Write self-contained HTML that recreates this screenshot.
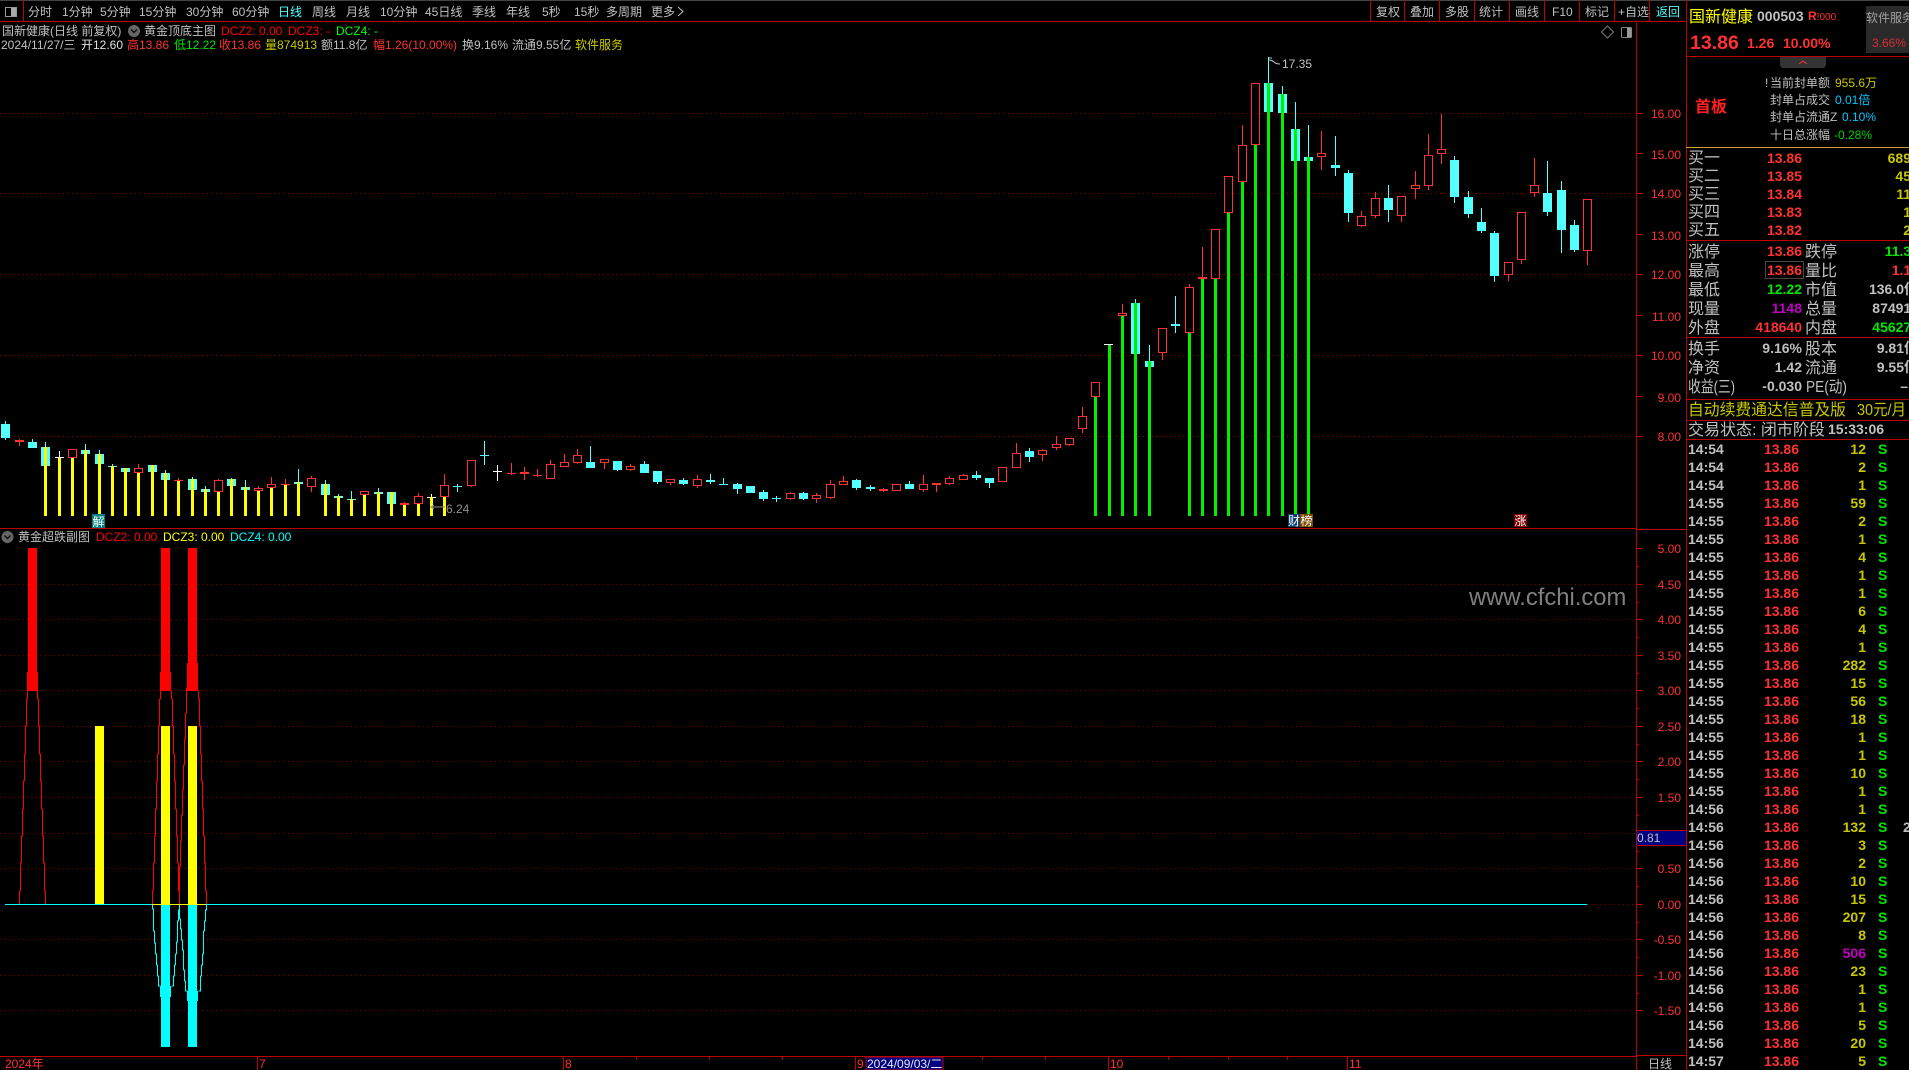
<!DOCTYPE html>
<html lang="zh"><head><meta charset="utf-8"><title>国新健康</title>
<style>
html,body{margin:0;padding:0;background:#000;width:1909px;height:1070px;overflow:hidden}
svg{display:block}
text{font-family:"Liberation Sans","WenQuanYi Zen Hei","Noto Sans CJK SC",sans-serif;font-size:12px;fill:#c0c0c0}
.g{fill:#c0c0c0}.r{fill:#ff3232}.y{fill:#c8c800}.c{fill:#54ffff}.n{fill:#00e600}.p{fill:#c000c0}
.big text,text.big{font-size:16px}
.b text{font-size:14px;font-weight:bold}
.e{text-anchor:end}
</style></head><body>
<svg width="1909" height="1070" viewBox="0 0 1909 1070" xmlns="http://www.w3.org/2000/svg">
<rect width="1909" height="1070" fill="#000"/>
<g shape-rendering="crispEdges">
<rect x="0" y="0" width="1909" height="1" fill="#444"/>
<!-- grid main -->
<path d="M0 113.5H1636M0 193.5H1636M0 274.5H1636M0 355.5H1636M0 436.5H1636" stroke="#a00000" stroke-dasharray="1 3.5" fill="none"/>
<!-- grid sub -->
<path d="M0 584.5H1636M0 619.5H1636M0 655.5H1636M0 690.5H1636M0 726.5H1636M0 761.5H1636M0 797.5H1636M0 833.5H1636M0 868.5H1636M1587 904.5H1636M0 939.5H1636M0 975.5H1636M0 1010.5H1636" stroke="#900000" stroke-dasharray="1 3.5" fill="none"/>
<!-- frame -->
<path d="M0 21.5H1686M0 528.5H1636M0 1056.5H1636M1636 1055.5H1686M1636.5 21V1070M1686.5 0V1070M23.5 0V21M1370.5 0V21M1404.5 0V21M1439.5 0V21M1474.5 0V21M1509.5 0V21M1544.5 0V21M1579.5 0V21M1614.5 0V21M1649.5 0V21M1686 56.5H1909M1686 240.5H1909M1686 337.5H1909M1686 399.5H1909M1686 420.5H1909M1686 439.5H1909M1636 529.5H1686" stroke="#c00000" fill="none"/>
<rect x="1686" y="147" width="223" height="1" fill="#d0a030"/>
<!-- axis ticks -->
<path d="M1636 113.5h6M1636 153.5h6M1636 193.5h6M1636 234.5h6M1636 274.5h6M1636 315.5h6M1636 355.5h6M1636 396.5h6M1636 436.5h6M1636 548.5h6M1636 584.5h6M1636 619.5h6M1636 655.5h6M1636 690.5h6M1636 726.5h6M1636 761.5h6M1636 797.5h6M1636 833.5h6M1636 868.5h6M1636 904.5h6M1636 939.5h6M1636 975.5h6M1636 1010.5h6M1636 566.5h3M1636 602.5h3M1636 637.5h3M1636 673.5h3M1636 708.5h3M1636 744.5h3M1636 779.5h3M1636 815.5h3M1636 851.5h3M1636 886.5h3M1636 922.5h3M1636 957.5h3M1636 993.5h3" stroke="#c00000" fill="none"/>
<path d="M257.5 1057V1070M563.5 1057V1070M855.5 1057V1070M1108.5 1057V1070M1347.5 1057V1070M636.5 1057v3M709.5 1057v3M782.5 1057v3M982.5 1057v3M1045.5 1057v3M1168.5 1057v3M1228.5 1057v3M1287.5 1057v3" stroke="#c00000" fill="none"/>
<!-- cyan candles -->
<path fill="#54ffff" d="M5 421h1V440h-1zM1 424h9V438h-9zM32 439h1V448h-1zM28 442h9V448h-9zM45 442h1V466h-1zM41 447h9V466h-9zM85 444h1V454h-1zM81 450h9V454h-9zM99 450h1V464h-1zM95 454h9V464h-9zM112 464h1V467h-1zM108 466h9V467h-9zM121 468h9V472h-9zM148 465h9V472h-9zM165 470h1V480h-1zM161 473h9V480h-9zM192 477h1V490h-1zM188 479h9V490h-9zM205 486h1V492h-1zM201 489h9V492h-9zM227 479h9V486h-9zM231 478h1V479h-1zM245 480h1V490h-1zM241 487h9V490h-9zM298 469h1V484h-1zM294 482h9V484h-9zM325 480h1V495h-1zM321 484h9V495h-9zM338 494h1V498h-1zM334 496h9V498h-9zM351 491h1V500h-1zM347 499h9V500h-9zM378 488h1V494h-1zM374 492h9V494h-9zM387 492h9V504h-9zM457 484h1V492h-1zM453 486h9V487h-9zM484 441h1V465h-1zM480 455h9V456h-9zM590 446h1V468h-1zM586 462h9V468h-9zM613 461h9V470h-9zM617 470h1V471h-1zM644 461h1V473h-1zM640 464h9V473h-9zM653 471h9V482h-9zM657 482h1V484h-1zM683 478h1V485h-1zM679 480h9V484h-9zM710 474h1V484h-1zM706 480h9V482h-9zM723 478h1V485h-1zM719 484h9V485h-9zM737 483h1V494h-1zM733 484h9V489h-9zM746 486h9V493h-9zM763 490h1V501h-1zM759 492h9V499h-9zM776 496h1V502h-1zM772 498h9V499h-9zM803 492h1V500h-1zM799 493h9V499h-9zM856 479h1V490h-1zM852 480h9V488h-9zM870 485h1V491h-1zM866 487h9V489h-9zM909 481h1V489h-1zM905 484h9V489h-9zM976 471h1V480h-1zM972 475h9V478h-9zM985 478h9V483h-9zM989 483h1V488h-1zM1029 448h1V462h-1zM1025 451h9V457h-9zM1135 299h1V354h-1zM1131 303h9V354h-9zM1149 345h1V367h-1zM1145 361h9V367h-9zM1175 296h1V333h-1zM1171 324h9V326h-9zM1268 57h1V112h-1zM1264 83h9V112h-9zM1282 86h1V113h-1zM1278 94h9V113h-9zM1295 102h1V161h-1zM1291 129h9V161h-9zM1308 125h1V161h-1zM1304 157h9V161h-9zM1335 136h1V176h-1zM1331 165h9V168h-9zM1348 170h1V222h-1zM1344 173h9V213h-9zM1388 185h1V222h-1zM1384 198h9V210h-9zM1454 156h1V203h-1zM1450 160h9V197h-9zM1468 191h1V218h-1zM1464 197h9V214h-9zM1481 208h1V233h-1zM1477 222h9V231h-9zM1494 231h1V282h-1zM1490 233h9V276h-9zM1547 161h1V216h-1zM1543 193h9V212h-9zM1561 181h1V253h-1zM1557 190h9V230h-9zM1574 220h1V252h-1zM1570 225h9V250h-9z"/>
<!-- red filled / wicks -->
<path fill="#ff3232" d="M19 439h1V446h-1zM15 440h9V442h-9zM138 464h1V468h-1zM178 478h1V481h-1zM174 480h9V481h-9zM218 479h1V480h-1zM258 486h1V488h-1zM271 477h1V484h-1zM285 479h1V484h-1zM281 484h9V485h-9zM311 476h1V478h-1zM311 487h1V492h-1zM404 502h1V505h-1zM400 503h9V505h-9zM418 493h1V496h-1zM444 474h1V485h-1zM471 486h1V487h-1zM511 463h1V475h-1zM507 473h9V474h-9zM524 467h1V480h-1zM520 472h9V474h-9zM537 469h1V477h-1zM533 475h9V476h-9zM550 460h1V464h-1zM564 454h1V462h-1zM577 449h1V455h-1zM577 463h1V464h-1zM604 463h1V469h-1zM630 464h1V466h-1zM630 470h1V471h-1zM670 483h1V485h-1zM697 475h1V479h-1zM697 486h1V488h-1zM790 492h1V493h-1zM790 499h1V500h-1zM816 493h1V495h-1zM816 499h1V503h-1zM830 480h1V484h-1zM830 498h1V499h-1zM843 476h1V481h-1zM883 488h1V492h-1zM879 489h9V491h-9zM923 475h1V484h-1zM923 490h1V492h-1zM936 485h1V492h-1zM932 483h9V485h-9zM949 476h1V478h-1zM949 484h1V485h-1zM963 474h1V475h-1zM1016 443h1V453h-1zM1042 449h1V450h-1zM1042 455h1V461h-1zM1056 436h1V444h-1zM1056 448h1V450h-1zM1069 445h1V446h-1zM1082 407h1V416h-1zM1082 429h1V433h-1zM1122 304h1V313h-1zM1162 353h1V360h-1zM1189 284h1V287h-1zM1202 247h1V277h-1zM1198 277h9V279h-9zM1242 125h1V145h-1zM1321 131h1V153h-1zM1321 157h1V170h-1zM1361 211h1V216h-1zM1361 226h1V227h-1zM1375 192h1V198h-1zM1375 216h1V218h-1zM1401 216h1V222h-1zM1415 171h1V185h-1zM1415 189h1V199h-1zM1428 134h1V155h-1zM1428 186h1V190h-1zM1441 114h1V149h-1zM1441 154h1V164h-1zM1508 275h1V281h-1zM1521 260h1V264h-1zM1534 158h1V185h-1zM1534 193h1V197h-1zM1587 251h1V265h-1z"/>
<!-- red hollow -->
<path fill="none" stroke="#ff3232" d="M68.500 449.500h8v8h-8zM134.500 468.500h8v4h-8zM214.500 480.500h8v11h-8zM254.500 488.500h8v2h-8zM267.500 484.500h8v3h-8zM307.500 478.500h8v8h-8zM360.500 491.500h8v3h-8zM414.500 496.500h8v7h-8zM440.500 485.500h8v11h-8zM467.500 460.500h8v25h-8zM546.500 464.500h8v14h-8zM560.500 462.500h8v4h-8zM573.500 455.500h8v7h-8zM600.500 459.500h8v3h-8zM626.500 466.500h8v3h-8zM666.500 479.500h8v3h-8zM693.500 479.500h8v6h-8zM786.500 493.500h8v5h-8zM812.500 495.500h8v3h-8zM826.500 484.500h8v13h-8zM839.500 481.500h8v3h-8zM892.500 484.500h8v6h-8zM919.500 484.500h8v5h-8zM945.500 478.500h8v5h-8zM959.500 475.500h8v4h-8zM998.500 467.500h8v14h-8zM1012.500 453.500h8v14h-8zM1038.500 450.500h8v4h-8zM1052.500 444.500h8v3h-8zM1065.500 438.500h8v6h-8zM1078.500 416.500h8v12h-8zM1091.500 382.500h8v14h-8zM1118.500 313.500h8v2h-8zM1158.500 328.500h8v24h-8zM1185.500 287.500h8v45h-8zM1211.500 229.500h8v49h-8zM1224.500 176.500h8v36h-8zM1238.500 145.500h8v36h-8zM1251.500 83.500h8v61h-8zM1317.500 153.500h8v3h-8zM1357.500 216.500h8v9h-8zM1371.500 198.500h8v17h-8zM1397.500 196.500h8v19h-8zM1411.500 185.500h8v3h-8zM1424.500 155.500h8v30h-8zM1437.500 149.500h8v4h-8zM1504.500 262.500h8v12h-8zM1517.500 212.500h8v47h-8zM1530.500 185.500h8v7h-8zM1583.500 199.500h8v51h-8z"/>
<!-- white dojis -->
<path fill="#fff" d="M59 451h1V458h-1zM55 457h9V458h-9zM431 494h1V498h-1zM427 497h9V498h-9zM497 465h1V481h-1zM493 471h9V472h-9zM1104 344h9V345h-9z"/>
<!-- yellow bars -->
<path fill="#ffff00" d="M44 447h3V516h-3zM58 458h3V516h-3zM71 458h3V516h-3zM84 450h3V516h-3zM98 454h3V516h-3zM111 466h3V516h-3zM124 468h3V516h-3zM137 473h3V516h-3zM151 465h3V516h-3zM164 473h3V516h-3zM177 481h3V516h-3zM191 479h3V516h-3zM204 489h3V516h-3zM217 492h3V516h-3zM230 479h3V516h-3zM244 487h3V516h-3zM257 491h3V516h-3zM270 488h3V516h-3zM284 485h3V516h-3zM297 482h3V516h-3zM324 484h3V516h-3zM337 496h3V516h-3zM350 499h3V516h-3zM363 495h3V516h-3zM377 492h3V516h-3zM390 492h3V516h-3zM403 505h3V516h-3zM417 504h3V516h-3zM430 497h3V516h-3zM443 497h3V516h-3z"/>
<!-- green bars -->
<path fill="#00f000" d="M1094 397h3V516h-3zM1108 345h3V516h-3zM1121 316h3V516h-3zM1134 303h3V516h-3zM1148 361h3V516h-3zM1188 333h3V516h-3zM1201 279h3V516h-3zM1214 279h3V516h-3zM1227 213h3V516h-3zM1241 182h3V516h-3zM1254 145h3V516h-3zM1267 83h3V516h-3zM1281 94h3V516h-3zM1294 129h3V516h-3zM1307 157h3V516h-3z"/>
<!-- sub chart -->
<path fill="#ff0000" d="M28 548h9V672h1V691H27V672h1zM161 548h9V672h1V691H160V672h1zM188 548h9V663h1V691H187V663h1z"/>
<path fill="none" stroke="#ff0000" d="M27.500 691V699H26.500V726H25.500V754H24.500V781H23.500V809H22.500V836H21.500V863H20.500V891H19.500V904M37.500 691V699H38.500V726H39.500V754H40.500V781H41.500V809H42.500V836H43.500V863H44.500V891H45.500V904M160.500 691V699H159.500V726H158.500V754H157.500V781H156.500V809H155.500V836H154.500V863H153.500V891H152.500V904M171.500 691V699H172.500V726H173.500V754H174.500V781H175.500V809H176.500V836H177.500V863H178.500V891H179.500V904M187.500 663V688H186.500V713H185.500V739H184.500V765H183.500V790H182.500V815H181.500V841H180.500V866H179.500V904M198.500 691V699H199.500V726H200.500V754H201.500V781H202.500V809H203.500V836H204.500V863H205.500V891H206.500V904"/>
<path fill="#ffff00" d="M95 726h9V904h-9zM161 726h9V904h-9zM188 726h9V904h-9zM152 904h54v1h-54z"/>
<rect x="5" y="904" width="147" height="1" fill="#00ffff"/>
<rect x="206" y="904" width="1381" height="1" fill="#00ffff"/>
<path fill="#00ffff" d="M161 905h9V986h1V997h-1V1047h-9V997h-1V986h1zM188 905h9V991h1V1001h-1V1047h-9V1001h-1V991h1z"/>
<path fill="none" stroke="#00ffff" d="M152.500 905V909H153.500V931H154.500V943H155.500V954H156.500V965H157.500V976H158.500V986H160.500M179.500 905V910H178.500V921H177.500V942H176.500V954H175.500V965H174.500V976H173.500V986H171.500M179.500 905V919H180.500V929H181.500V940H182.500V950H183.500V970H184.500V981H185.500V991H187.500M206.500 905V910H205.500V921H204.500V931H203.500V954H202.500V965H201.500V976H200.500V991H198.500"/>
<!-- flags -->
<rect x="92" y="514" width="13" height="14" fill="#008080"/>
<rect x="1288" y="514" width="12" height="13" fill="#103a6a"/>
<rect x="1300" y="514" width="13" height="13" fill="#804a00"/>
<rect x="1514" y="514" width="13" height="13" fill="#800000"/>
<!-- 0.81 box -->
<rect x="1637" y="830" width="49" height="16" fill="#000080"/>
<path d="M1637 830.500H1686M1637 845.500H1686" stroke="#c00000"/>
<!-- date box -->
<rect x="866" y="1057" width="77" height="13" fill="#000080" stroke="#c00000"/>
<!-- right panel box -->
<rect x="1866" y="6" width="43" height="47" fill="#2a2a2a"/>
<rect x="1765.500" y="261.500" width="38" height="17" fill="none" stroke="#444"/>
<path d="M1780 57h46v7q0 4-4 4h-38q-4 0-4-4z" fill="#333"/>
</g>
<path d="M1799 64l4-3 4 3" stroke="#ff3232" fill="none"/>
<!-- icons -->
<rect x="5.500" y="7.500" width="11" height="9" fill="none" stroke="#999"/><rect x="11" y="8" width="5" height="8" fill="#aaa"/>
<path d="M1607.500 26l6 6-6 6-6-6z" fill="none" stroke="#777"/>
<rect x="1621.500" y="27.500" width="10" height="10" rx="1" fill="none" stroke="#888"/><rect x="1627" y="28" width="4" height="9" fill="#999"/>
<circle cx="134" cy="31" r="6" fill="#666"/><path d="M131 29.500l3 3 3-3" stroke="#111" stroke-width="1.500" fill="none"/>
<circle cx="7.500" cy="537" r="6" fill="#666"/><path d="M4.500 535.500l3 3 3-3" stroke="#111" stroke-width="1.500" fill="none"/>
<path d="M1269 58h3M1269 60q3 0 5 2t6 2" stroke="#c0c0c0" fill="none"/>
<path d="M431 507h14M434 505l-3 2 3 2" stroke="#909090" fill="none"/>
<!-- menu -->
<g>
<text x="28" y="16">分时</text><text x="62" y="16">1分钟</text><text x="100" y="16">5分钟</text><text x="139" y="16">15分钟</text><text x="186" y="16">30分钟</text><text x="232" y="16">60分钟</text><text x="278" y="16" class="c">日线</text><text x="312" y="16">周线</text><text x="346" y="16">月线</text><text x="380" y="16">10分钟</text><text x="425" y="16">45日线</text><text x="472" y="16">季线</text><text x="506" y="16">年线</text><text x="542" y="16">5秒</text><text x="574" y="16">15秒</text><text x="606" y="16">多周期</text><text x="651" y="16">更多</text>
<path d="M678 7l5 4.500-5 4.500" stroke="#c0c0c0" fill="none"/>
<text x="1376" y="16">复权</text><text x="1410" y="16">叠加</text><text x="1445" y="16">多股</text><text x="1479" y="16">统计</text><text x="1515" y="16">画线</text><text x="1552" y="16">F10</text><text x="1585" y="16">标记</text><text x="1618" y="16">+自选</text><text x="1656" y="16" class="c">返回</text>
</g>
<!-- headers -->
<text x="2" y="35">国新健康(日线 前复权)</text><text x="144" y="35">黄金顶底主图</text>
<text x="221" y="35" style="fill:#ff0000">DCZ2: 0.00</text><text x="288" y="35" style="fill:#ff0000">DCZ3: -</text><text x="336" y="35" style="fill:#00ff00">DCZ4: -</text>
<text x="1" y="49">2024/11/27/三</text><text x="81" y="49" style="fill:#e0e0e0">开12.60</text><text x="127" y="49" class="r">高13.86</text><text x="174" y="49" class="n">低12.22</text><text x="219" y="49" class="r">收13.86</text><text x="265" y="49" class="y">量874913</text><text x="321" y="49">额11.8亿</text><text x="373" y="49" class="r">幅1.26(10.00%)</text><text x="462" y="49">换9.16%</text><text x="512" y="49">流通9.55亿</text><text x="575" y="49" class="y">软件服务</text>
<text x="18" y="541">黄金超跌副图</text><text x="96" y="541" style="fill:#ff0000">DCZ2: 0.00</text><text x="163" y="541" style="fill:#ffff00">DCZ3: 0.00</text><text x="230" y="541" style="fill:#00ffff">DCZ4: 0.00</text>
<text x="1282" y="68">17.35</text><text x="446" y="513" style="fill:#909090">6.24</text>
<text x="1469" y="605" style="font-size:23.800px;fill:#808080">www.cfchi.com</text>
<text x="92.500" y="526" style="fill:#fff">解</text><text x="1288" y="525" style="fill:#fff">财</text><text x="1300.500" y="525" style="fill:#fff">榜</text><text x="1514.500" y="525" style="fill:#fff">涨</text>
<!-- axis -->
<g text-anchor="end">
<text class="r" x="1681" y="118">16.00</text><text class="r" x="1681" y="159">15.00</text><text class="r" x="1681" y="198">14.00</text><text class="r" x="1681" y="240">13.00</text><text class="r" x="1681" y="279">12.00</text><text class="r" x="1681" y="321">11.00</text><text class="r" x="1681" y="360">10.00</text><text class="r" x="1681" y="402">9.00</text><text class="r" x="1681" y="441">8.00</text>
<text class="r" x="1681" y="553">5.00</text><text class="r" x="1681" y="589">4.50</text><text class="r" x="1681" y="624">4.00</text><text class="r" x="1681" y="660">3.50</text><text class="r" x="1681" y="695">3.00</text><text class="r" x="1681" y="731">2.50</text><text class="r" x="1681" y="766">2.00</text><text class="r" x="1681" y="802">1.50</text><text class="r" x="1681" y="873">0.50</text><text class="r" x="1681" y="909">0.00</text><text class="r" x="1681" y="944">-0.50</text><text class="r" x="1681" y="980">-1.00</text><text class="r" x="1681" y="1015">-1.50</text>
</g>
<text x="1637" y="842">0.81</text>
<text x="1648" y="1068">日线</text>
<text x="5" y="1068" class="r">2024年</text><text x="259" y="1068" class="r">7</text><text x="565" y="1068" class="r">8</text><text x="857" y="1068" class="r">9</text><text x="1110" y="1068" class="r">10</text><text x="1349" y="1068" class="r">11</text>
<text x="867" y="1068" style="fill:#e8e8e8">2024/09/03/二</text>
<!-- right header -->
<text x="1689" y="22" style="font-size:16px;fill:#ffff00">国新健康</text>
<text x="1757" y="21" style="font-size:14px;font-weight:bold">000503</text>
<text x="1808" y="20" class="r" style="font-size:10px"><tspan style="font-size:12px;font-weight:bold">R</tspan>!000</text>
<text x="1866" y="22" style="fill:#a0a0a0">软件服务</text>
<text x="1872" y="47" style="fill:#d83030">3.66%</text>
<text x="1690" y="49" class="r" style="font-size:19.500px;font-weight:bold">13.86</text>
<text x="1747" y="48" class="r" style="font-size:14px;font-weight:bold">1.26</text>
<text x="1783" y="48" class="r" style="font-size:14px;font-weight:bold">10.00%</text>
<text x="1695" y="112" style="font-size:16px;font-weight:bold;fill:#ff2020">首板</text>
<text x="1765" y="87">!</text><text x="1770" y="87">当前封单额</text><text x="1835" y="87" class="y">955.6万</text>
<text x="1770" y="104">封单占成交</text><text x="1835" y="104" style="fill:#00c8ff">0.01倍</text>
<text x="1770" y="121">封单占流通Z</text><text x="1842" y="121" style="fill:#00c8ff">0.10%</text>
<text x="1770" y="139">十日总涨幅</text><text x="1834" y="139" style="fill:#00d000">-0.28%</text>
<!-- five levels & stats labels -->
<g class="big">
<text x="1688" y="163">买一</text><text x="1688" y="181">买二</text><text x="1688" y="199">买三</text><text x="1688" y="217">买四</text><text x="1688" y="235">买五</text>
<text x="1688" y="257">涨停</text><text x="1688" y="276">最高</text><text x="1688" y="295">最低</text><text x="1688" y="314">现量</text><text x="1688" y="333">外盘</text>
<text x="1688" y="354">换手</text><text x="1688" y="373">净资</text><text x="1688" y="392" textLength="47" lengthAdjust="spacingAndGlyphs">收益(三)</text>
<text x="1805" y="257">跌停</text><text x="1805" y="276">量比</text><text x="1805" y="295">市值</text><text x="1805" y="314">总量</text><text x="1805" y="333">内盘</text>
<text x="1805" y="354">股本</text><text x="1805" y="373">流通</text><text x="1806" y="392" textLength="41" lengthAdjust="spacingAndGlyphs">PE(动)</text>
<text x="1688" y="415" class="y" textLength="158" lengthAdjust="spacingAndGlyphs">自动续费通达信普及版</text><text x="1857" y="415" class="y" textLength="49" lengthAdjust="spacingAndGlyphs">30元/月</text>
<text x="1688" y="435">交易状态: 闭市阶段</text>
</g>
<g class="b">
<text x="1828" y="434">15:33:06</text>
<g text-anchor="end">
<text class="r" x="1802" y="163">13.86</text><text class="r" x="1802" y="181">13.85</text><text class="r" x="1802" y="199">13.84</text><text class="r" x="1802" y="217">13.83</text><text class="r" x="1802" y="235">13.82</text>
<text class="y" x="1911" y="163">689</text><text class="y" x="1911" y="181">45</text><text class="y" x="1911" y="199">11</text><text class="y" x="1911" y="217">1</text><text class="y" x="1911" y="235">2</text>
<text class="r" x="1802" y="256">13.86</text><text class="r" x="1802" y="275">13.86</text><text class="n" x="1802" y="294">12.22</text><text class="p" x="1802" y="313">1148</text><text class="r" x="1802" y="332">418640</text>
<text x="1802" y="353">9.16%</text><text x="1802" y="372">1.42</text><text x="1802" y="391">-0.030</text>
<text class="n" x="1919" y="256">11.34</text><text class="r" x="1919" y="275">1.18</text><text x="1918" y="294">136.0亿</text><text x="1919" y="313">874913</text><text class="n" x="1919" y="332">456273</text>
<text x="1918" y="353">9.81亿</text><text x="1918" y="372">9.55亿</text><text x="1908" y="391">–</text>
</g>
</g>
<!-- tape -->
<g class="b">
<g>
<text x="1688" y="454">14:54</text><text x="1688" y="472">14:54</text><text x="1688" y="490">14:54</text><text x="1688" y="508">14:55</text><text x="1688" y="526">14:55</text><text x="1688" y="544">14:55</text><text x="1688" y="562">14:55</text><text x="1688" y="580">14:55</text><text x="1688" y="598">14:55</text><text x="1688" y="616">14:55</text><text x="1688" y="634">14:55</text><text x="1688" y="652">14:55</text><text x="1688" y="670">14:55</text><text x="1688" y="688">14:55</text><text x="1688" y="706">14:55</text><text x="1688" y="724">14:55</text><text x="1688" y="742">14:55</text><text x="1688" y="760">14:55</text><text x="1688" y="778">14:55</text><text x="1688" y="796">14:55</text><text x="1688" y="814">14:56</text><text x="1688" y="832">14:56</text><text x="1688" y="850">14:56</text><text x="1688" y="868">14:56</text><text x="1688" y="886">14:56</text><text x="1688" y="904">14:56</text><text x="1688" y="922">14:56</text><text x="1688" y="940">14:56</text><text x="1688" y="958">14:56</text><text x="1688" y="976">14:56</text><text x="1688" y="994">14:56</text><text x="1688" y="1012">14:56</text><text x="1688" y="1030">14:56</text><text x="1688" y="1048">14:56</text><text x="1688" y="1066">14:57</text>
</g>
<g text-anchor="end">
<text class="r" x="1799" y="454">13.86</text><text class="r" x="1799" y="472">13.86</text><text class="r" x="1799" y="490">13.86</text><text class="r" x="1799" y="508">13.86</text><text class="r" x="1799" y="526">13.86</text><text class="r" x="1799" y="544">13.86</text><text class="r" x="1799" y="562">13.86</text><text class="r" x="1799" y="580">13.86</text><text class="r" x="1799" y="598">13.86</text><text class="r" x="1799" y="616">13.86</text><text class="r" x="1799" y="634">13.86</text><text class="r" x="1799" y="652">13.86</text><text class="r" x="1799" y="670">13.86</text><text class="r" x="1799" y="688">13.86</text><text class="r" x="1799" y="706">13.86</text><text class="r" x="1799" y="724">13.86</text><text class="r" x="1799" y="742">13.86</text><text class="r" x="1799" y="760">13.86</text><text class="r" x="1799" y="778">13.86</text><text class="r" x="1799" y="796">13.86</text><text class="r" x="1799" y="814">13.86</text><text class="r" x="1799" y="832">13.86</text><text class="r" x="1799" y="850">13.86</text><text class="r" x="1799" y="868">13.86</text><text class="r" x="1799" y="886">13.86</text><text class="r" x="1799" y="904">13.86</text><text class="r" x="1799" y="922">13.86</text><text class="r" x="1799" y="940">13.86</text><text class="r" x="1799" y="958">13.86</text><text class="r" x="1799" y="976">13.86</text><text class="r" x="1799" y="994">13.86</text><text class="r" x="1799" y="1012">13.86</text><text class="r" x="1799" y="1030">13.86</text><text class="r" x="1799" y="1048">13.86</text><text class="r" x="1799" y="1066">13.86</text>
<text class="y" x="1866" y="454">12</text><text class="y" x="1866" y="472">2</text><text class="y" x="1866" y="490">1</text><text class="y" x="1866" y="508">59</text><text class="y" x="1866" y="526">2</text><text class="y" x="1866" y="544">1</text><text class="y" x="1866" y="562">4</text><text class="y" x="1866" y="580">1</text><text class="y" x="1866" y="598">1</text><text class="y" x="1866" y="616">6</text><text class="y" x="1866" y="634">4</text><text class="y" x="1866" y="652">1</text><text class="y" x="1866" y="670">282</text><text class="y" x="1866" y="688">15</text><text class="y" x="1866" y="706">56</text><text class="y" x="1866" y="724">18</text><text class="y" x="1866" y="742">1</text><text class="y" x="1866" y="760">1</text><text class="y" x="1866" y="778">10</text><text class="y" x="1866" y="796">1</text><text class="y" x="1866" y="814">1</text><text class="y" x="1866" y="832">132</text><text class="y" x="1866" y="850">3</text><text class="y" x="1866" y="868">2</text><text class="y" x="1866" y="886">10</text><text class="y" x="1866" y="904">15</text><text class="y" x="1866" y="922">207</text><text class="y" x="1866" y="940">8</text><text class="p" x="1866" y="958">506</text><text class="y" x="1866" y="976">23</text><text class="y" x="1866" y="994">1</text><text class="y" x="1866" y="1012">1</text><text class="y" x="1866" y="1030">5</text><text class="y" x="1866" y="1048">20</text><text class="y" x="1866" y="1066">5</text>
</g>
<g>
<text class="n" x="1878" y="454">S</text><text class="n" x="1878" y="472">S</text><text class="n" x="1878" y="490">S</text><text class="n" x="1878" y="508">S</text><text class="n" x="1878" y="526">S</text><text class="n" x="1878" y="544">S</text><text class="n" x="1878" y="562">S</text><text class="n" x="1878" y="580">S</text><text class="n" x="1878" y="598">S</text><text class="n" x="1878" y="616">S</text><text class="n" x="1878" y="634">S</text><text class="n" x="1878" y="652">S</text><text class="n" x="1878" y="670">S</text><text class="n" x="1878" y="688">S</text><text class="n" x="1878" y="706">S</text><text class="n" x="1878" y="724">S</text><text class="n" x="1878" y="742">S</text><text class="n" x="1878" y="760">S</text><text class="n" x="1878" y="778">S</text><text class="n" x="1878" y="796">S</text><text class="n" x="1878" y="814">S</text><text class="n" x="1878" y="832">S</text><text class="n" x="1878" y="850">S</text><text class="n" x="1878" y="868">S</text><text class="n" x="1878" y="886">S</text><text class="n" x="1878" y="904">S</text><text class="n" x="1878" y="922">S</text><text class="n" x="1878" y="940">S</text><text class="n" x="1878" y="958">S</text><text class="n" x="1878" y="976">S</text><text class="n" x="1878" y="994">S</text><text class="n" x="1878" y="1012">S</text><text class="n" x="1878" y="1030">S</text><text class="n" x="1878" y="1048">S</text><text class="n" x="1878" y="1066">S</text>
<text x="1903" y="832">2</text>
</g>
</g>
</svg>
</body></html>
